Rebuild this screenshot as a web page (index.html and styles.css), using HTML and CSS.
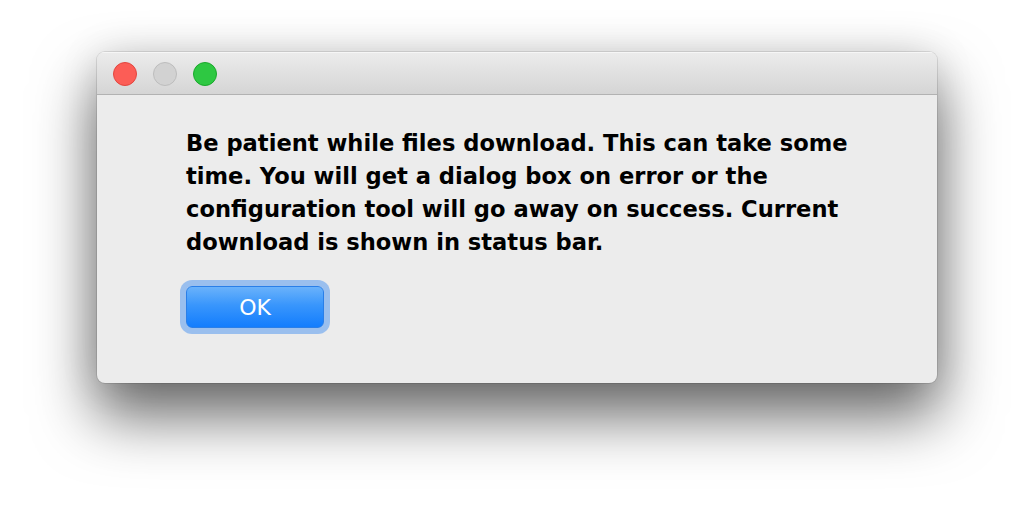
FILE: index.html
```html
<!DOCTYPE html>
<html>
<head>
<meta charset="utf-8">
<link rel="stylesheet" href="styles.css">
</head>
<body>
<div class="window">
  <div class="titlebar">
    <span class="light close"></span>
    <span class="light minimize"></span>
    <span class="light zoom"></span>
  </div>
  <div class="content">
    <p class="message">Be patient while files download. This can take some<br>time. You will get a dialog box on error or the<br>configuration tool will go away on success. Current<br>download is shown in status bar.</p>
    <button class="ok">OK</button>
  </div>
</div>
</body>
</html>
```
FILE: styles.css
```css
html, body {
  margin: 0;
  padding: 0;
  background: #ffffff;
}
html {
  min-height: 531px;
}
body {
  min-height: 531px;
  box-sizing: border-box;
  padding: 52px 0 0 97px;
  font-family: "DejaVu Sans", Verdana, sans-serif;
}
.window {
  width: 840px;
  height: 331px;
  box-sizing: border-box;
  background: #ececec;
  border-radius: 8px;
  box-shadow: 0 0 0 1px rgba(0,0,0,0.10), 0 32px 60px 2px rgba(0,0,0,0.58), 0 0 40px rgba(0,0,0,0.10);
  overflow: hidden;
  display: flex;
  flex-direction: column;
}
.titlebar {
  height: 43px;
  flex: none;
  background: linear-gradient(#ececec, #d5d5d5);
  border-bottom: 1px solid #b2b2b2;
  box-shadow: inset 0 1px 0 #f6f6f6;
  display: flex;
  align-items: center;
  gap: 16px;
  padding-left: 16px;
  padding-top: 2px;
  box-sizing: border-box;
}
.light {
  width: 24px;
  height: 24px;
  border-radius: 50%;
  box-sizing: border-box;
}
.close {
  background: #fc5d56;
  border: 1px solid #e2463f;
}
.minimize {
  background: #d2d2d2;
  border: 1.5px solid #bdbdbd;
}
.zoom {
  background: #2ec842;
  border: 1px solid #1aa82b;
}
.content {
  padding: 32px 0 0 89px;
}
.message {
  margin: 0;
  font-size: 22.6px;
  line-height: 33px;
  font-weight: bold;
  color: #000;
  letter-spacing: 0;
  white-space: nowrap;
}
.ok {
  margin-top: 27px;
  width: 138px;
  height: 42px;
  border: 1px solid #2a7fe8;
  border-radius: 6px;
  background: linear-gradient(#6ab2fb, #3996fc 45%, #137dfd);
  box-shadow: 0 0 0 6px rgba(110, 168, 240, 0.65);
  color: #fff;
  font-family: "DejaVu Sans", Verdana, sans-serif;
  font-size: 22px;
  padding: 0;
  display: block;
}
```
